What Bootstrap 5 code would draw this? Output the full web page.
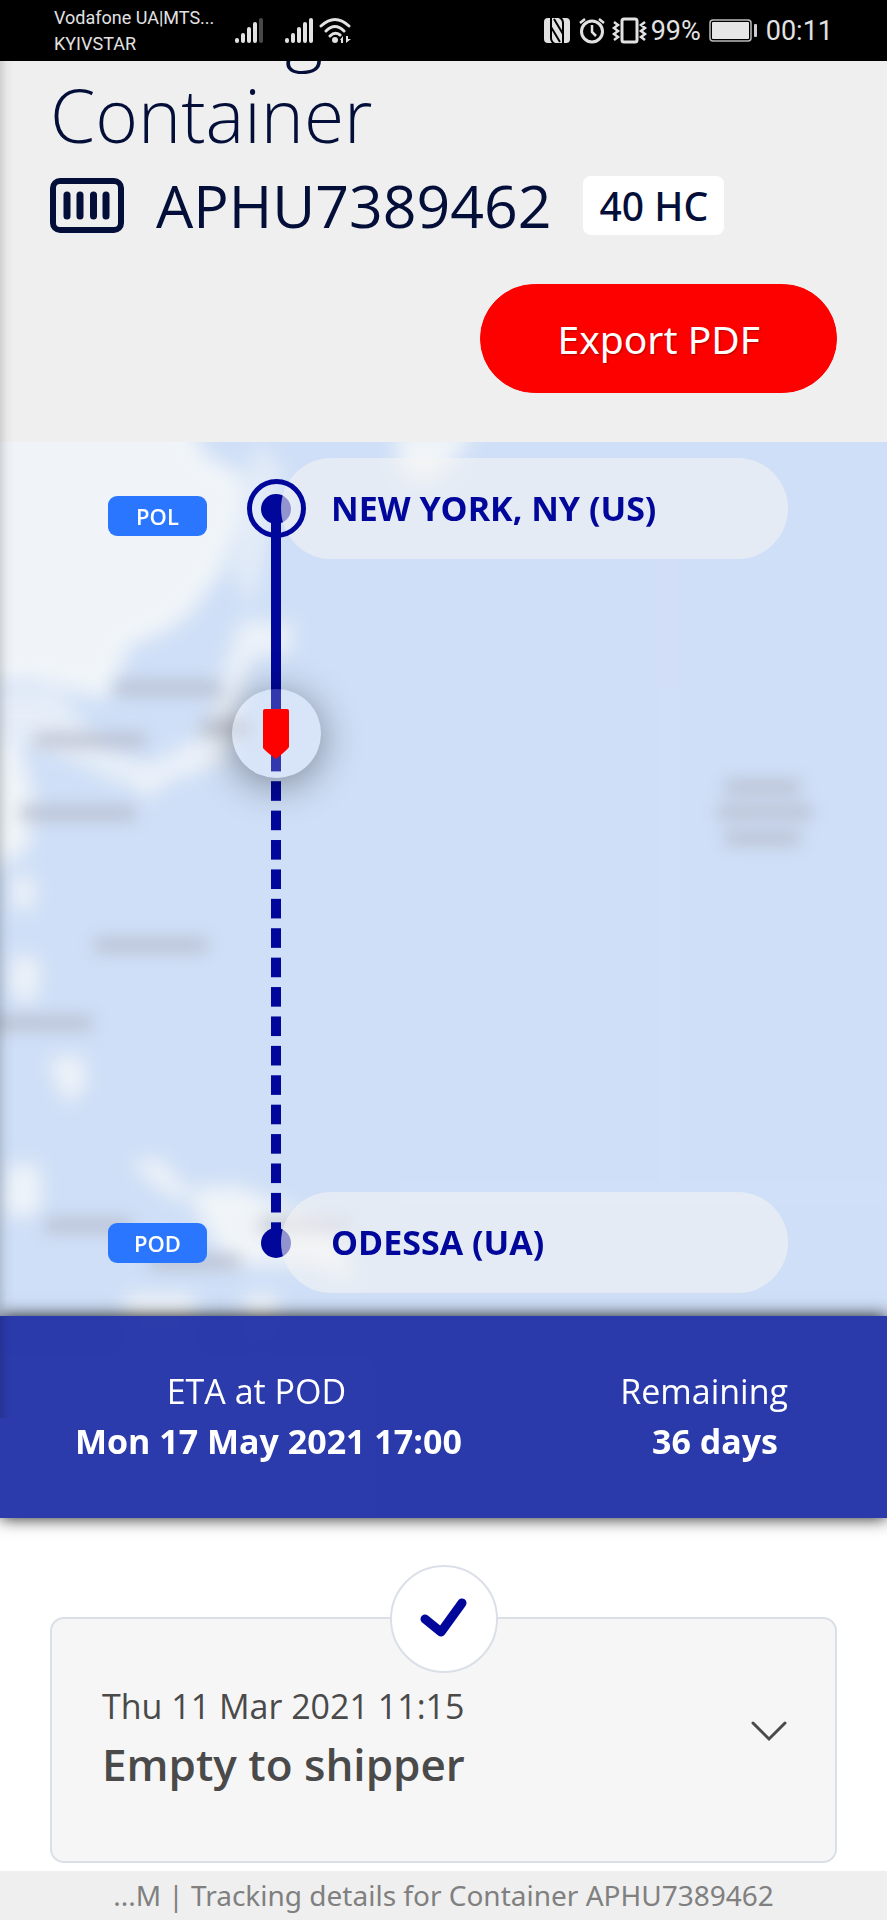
<!DOCTYPE html>
<html lang="en">
<head>
<meta charset="utf-8">
<meta name="viewport" content="width=device-width, initial-scale=1">
<title>Tracking details for Container APHU7389462</title>
<link href="https://cdn.jsdelivr.net/npm/bootstrap@5.3.0/dist/css/bootstrap.min.css" rel="stylesheet">
<style>
:root{--navy:#030f38;--blue:#00079a;--pad:50px}
body{font-family:"Open Sans","Noto Sans",sans-serif;color:#4a4a4a;background:#fff}
svg{display:block;flex:none}
.status-bar{background:#000;color:#e2e2e2;height:61px;padding:1px 54px 0;font-family:Roboto,sans-serif;z-index:5}
.carrier{font-size:18px;line-height:26px;width:160px}
.clock{font-size:27px;line-height:34px}
.side-shade::before{content:"";position:absolute;inset:0 auto 0 0;width:14px;background:linear-gradient(90deg,rgba(0,0,0,.13),rgba(0,0,0,.03) 50%,transparent);z-index:3;pointer-events:none}
.page-head{background:#efefef;color:var(--navy);padding:0 var(--pad) 49px;overflow:hidden}
.page-title{font-size:73px;line-height:86px;font-weight:300;margin:-75px 0 14px}
.box-row{gap:32px}
.box-no{font-size:59px;line-height:66px}
.box-type{font-family:"Noto Sans",sans-serif;font-size:39px;line-height:59px;font-weight:500;background:#fff;border-radius:8px;padding:0 16px}
.export-row{margin-top:46px}
.btn-export{--bs-btn-color:#fff;--bs-btn-bg:#fd0000;--bs-btn-border-color:#fd0000;--bs-btn-hover-color:#fff;--bs-btn-hover-bg:#d90000;--bs-btn-font-size:39px;--bs-btn-line-height:55px;font-family:"Noto Sans",sans-serif;border-radius:56px;padding:26px 76px;text-shadow:1px 1px 2px rgba(0,0,0,.3)}
.map-area{background:#cfdff7}
.map-area.side-shade::before{bottom:100px}
.map-art{position:absolute;inset:0;width:100%;height:100%}
.route{display:grid;grid-template-columns:108px 123px 90px 1fr 99px;grid-template-rows:101px 1fr 101px;padding:16px 0 23px;height:874px}
.tag{grid-column:2;grid-row:1;align-self:center;justify-self:start;width:99px;background:#2b76ff;color:#fff;border-radius:9px;font-size:22px;line-height:40px;font-weight:600;text-align:center}
.tag-pol{margin-top:14px}
.stop{grid-column:4;grid-row:1;margin-left:-40px;background:rgba(244,244,244,.6);border-radius:51px;color:var(--blue);font-size:34px;font-weight:700;line-height:46px;padding:27px 50px 28px;z-index:1}
.dot{grid-column:3;grid-row:1;place-self:center;width:30px;height:30px;border-radius:50%;background:var(--blue)}
.tag.row-last,.dot.row-last,.stop.row-last{grid-row:3}
.ring{grid-column:3;grid-row:1;place-self:center;width:59px;height:59px;border-radius:50%;border:5px solid var(--blue);z-index:2}
.leg{grid-column:3;grid-row:1/4;justify-self:center;width:10px;margin:51px 0;z-index:2}
.leg-done{height:233px;background:var(--blue)}
.leg-todo{background:linear-gradient(transparent 32%,var(--blue) 32%);background-size:10px 29px;background-repeat:no-repeat round}
.vessel{grid-column:3;grid-row:2;justify-self:center;width:89px;height:89px;margin-top:130px;border-radius:50%;background:rgba(255,255,255,.2);box-shadow:0 6px 40px rgba(0,0,0,.42);z-index:3}
.eta{background:rgba(29,45,165,.93);color:#fff;box-shadow:0 0 16px rgba(0,0,0,.9);padding:50px 75px 52px;font-size:34px;line-height:50px;z-index:2}
.eta dt{font-weight:400}
.eta dd{font-weight:700;margin:0}
.eta .days{padding-right:10px}
.events{padding:99px var(--pad) 8px}
.event{background:#f6f6f6;border:2px solid #dadfe8;border-radius:14px;color:#4a4a4a;padding:62px 48px 64px 50px}
.event-date{font-size:34px;line-height:50px}
.event-name{font-size:44px;line-height:66px;font-weight:600}
.event-mark{position:absolute;left:50%;top:0;translate:-50% -50%;width:108px;height:108px;border:2px solid #dadfe8;border-radius:50%;background:#fff}
.foot{background:#efefef;color:#808080;font-family:"Noto Sans",sans-serif;font-size:28px;line-height:49px}
</style>
</head>
<body class="d-flex flex-column min-vh-100">
<div class="status-bar d-flex align-items-center position-relative">
  <div class="carrier text-nowrap">Vodafone UA|MTS...<br>KYIVSTAR</div>
  <svg class="ms-3" width="140" height="28" viewBox="230 17 140 28" fill="#e2e2e2" role="img" aria-label="Signal and Wi-Fi">
    <g id="bars"><rect x="235" y="38" width="4" height="5" rx="2"/><rect x="241" y="33" width="4" height="10" rx="2"/><rect x="247" y="27" width="4" height="16" rx="2"/><rect x="253" y="22" width="4" height="21" rx="2"/></g>
    <rect x="259" y="18" width="4" height="25" rx="2" fill="#484848"/>
    <use href="#bars" x="50"/><rect x="309" y="18" width="4" height="25" rx="2"/>
    <g fill="none" stroke="#e2e2e2" stroke-width="3" stroke-linecap="round"><path d="M321 26Q335 13 349 26M326 31Q335 22 344 31M330 36Q335 31 340 35"/></g>
    <circle cx="335" cy="40" r="3"/><path d="M340 40l3-4v7h-2v-3zM346 36v7l5-4h-3v-3z"/>
  </svg>
  <div class="d-flex align-items-center ms-auto clock">
    <svg width="107" height="28" viewBox="544 17 107 28" fill="none" stroke="#e2e2e2" stroke-width="3" role="img" aria-label="NFC, alarm, vibrate">
      <rect x="544" y="18" width="26" height="25" rx="4" fill="#e2e2e2" stroke="none"/>
      <path stroke="#000" stroke-width="2" d="M551 18V38Q551 42 555 44M563 43V23Q563 19 559 17M551 27L560 42M554 19L563 34"/>
      <circle cx="592" cy="31.500" r="10.500"/><path d="M592 25v7l4 4M580 23l5-4M599 19l5 4" stroke-width="2.500"/>
      <rect x="622" y="19" width="15" height="23" rx="2"/>
      <path stroke-width="2.500" d="M614 22l4 3-4 3 4 3-4 3 4 3-4 3M645 22l-4 3 4 3-4 3 4 3-4 3 4 3"/>
    </svg>
    <span>99%</span>
    <svg class="mx-2" width="49" height="24" viewBox="0 0 49 24" role="img" aria-label="Battery"><rect x="1" y="1" width="41" height="21" rx="3" fill="none" stroke="#bbb" stroke-width="1.500"/><rect x="3" y="3" width="37" height="17" rx="1" fill="#e6e6e6"/><rect x="45" y="5" width="3" height="13" rx="1" fill="#ccc"/></svg>
    <span>00:11</span>
  </div>
</div>

<header class="page-head side-shade position-relative">
  <h1 class="page-title">Tracking details for<br>Container</h1>
  <div class="box-row d-flex align-items-center">
    <svg width="74" height="55" viewBox="0 0 74 55" fill="none" stroke="#030f38"><rect x="3" y="3" width="68" height="49" rx="7" stroke-width="6"/><path d="M17 17v21M30 17v21M43.500 17v21M56 17v21" stroke-width="7" stroke-linecap="round"/></svg>
    <span class="box-no">APHU7389462</span>
    <span class="box-type">40 HC</span>
  </div>
  <div class="export-row text-end"><button type="button" class="btn btn-export">Export PDF</button></div>
</header>

<section class="map-area side-shade position-relative" aria-label="Route">
  <svg class="map-art" viewBox="0 442 887 1076" preserveAspectRatio="none" aria-hidden="true">
    <defs><filter id="soft" x="-20%" y="-20%" width="140%" height="140%"><feGaussianBlur stdDeviation="10"/></filter><filter id="haze" x="-50%" y="-100%" width="200%" height="300%"><feGaussianBlur stdDeviation="8"/></filter></defs>
    <g filter="url(#soft)" fill="#f0f4f8">
      <path d="M-30 400H180L205 455 245 475 240 520 222 570 190 615 160 635 130 645 112 690 100 700 66 688 30 680-30 685Z"/>
      <path d="M60 690L95 740 140 760 150 775 120 785 70 760 35 745-30 725V690Z" opacity=".7"/>
      <path d="M255 440L285 470 270 540 252 610 232 570Z" opacity=".6"/>
      <path d="M240 620L294 623 289 655 255 655 240 690 236 730 222 765 170 780 145 800 125 775 170 755 210 730 218 690 228 660Z" opacity=".9"/>
      <path d="M395 430H478L450 465 430 485 400 475Z"/>
      <path d="M-10 730L20 745 34 800 28 850-10 870Z"/>
      <path d="M12 875l24 5-5 32-17-5zM12 955l28 5-7 48-21-15zM48 1060l34-5 4 30-19 20zM8 1165h32v50H5zM130 1163l28-5 28 30-8 14zM185 1190l50-5 55 23 50 25 15 50-50-20-50 3-30-5z"/>
      <path d="M125 1295h70v45h-70zM245 1295h32v40h-32z"/>
      <path d="M-10 1350h390v200H-10z" opacity=".5"/>
    </g>
    <g fill="none" stroke="#b3b8c6" stroke-width="15" filter="url(#haze)" opacity=".7">
      <path d="M115 688H220M35 740H145M200 728H250M20 813H135M95 945H207M-10 1023H92M45 1225H130M260 1225H350M150 1262H240M725 787H800M718 812H812M725 838H800"/>
    </g>
    <path d="M656 559h24v128h-24z" fill="#d2dcf7" opacity=".8"/><path d="M659 687h20v495h208v24H400v-24h259z" fill="#d2e1fa" opacity=".5"/>
  </svg>
  <div class="route position-relative">
    <span class="tag tag-pol">POL</span>
    <span class="dot"></span>
    <span class="ring"></span>
    <div class="stop">NEW YORK, NY (US)</div>
    <div class="leg d-flex flex-column"><div class="leg-done"></div><div class="leg-todo flex-grow-1"></div></div>
    <div class="vessel d-flex justify-content-center"><svg class="mt-3" width="26" height="56" viewBox="0 0 26 56" role="img" aria-label="Vessel position"><path fill="#fd0000" d="M2 4H24Q26 4 26 6V42Q24 45 13 54Q2 46 0 43V6Q0 4 2 4Z"/></svg></div>
    <span class="tag row-last">POD</span>
    <span class="dot row-last"></span>
    <div class="stop row-last">ODESSA (UA)</div>
  </div>
  <dl class="eta position-relative d-flex justify-content-between text-center mb-0">
    <div><dt class="pe-4">ETA at POD</dt><dd>Mon 17 May 2021 17:00</dd></div>
    <div class="text-end me-4"><dt>Remaining</dt><dd class="days">36 days</dd></div>
  </dl>
</section>

<main class="events">
  <article class="event position-relative d-flex align-items-center justify-content-between">
    <span class="event-mark d-flex align-items-center justify-content-center"><svg width="48" height="42" viewBox="0 0 48 42" fill="none" stroke="#00079a" stroke-width="9" stroke-linecap="round" stroke-linejoin="round" role="img" aria-label="Completed"><path d="M5 21L21 34 42 5"/></svg></span>
    <div><div class="event-date">Thu 11 Mar 2021 11:15</div><div class="event-name">Empty to shipper</div></div>
    <button type="button" class="btn border-0 p-0 mb-3" aria-label="Show details"><svg width="36" height="22" viewBox="0 0 36 22" fill="none" stroke="#4a4a4a" stroke-width="3" stroke-linecap="round"><path d="M2 3L18 19 34 3"/></svg></button>
  </article>
</main>
<footer class="foot text-center mt-auto text-nowrap">...M | Tracking details for Container APHU7389462</footer>
<script src="https://cdn.jsdelivr.net/npm/bootstrap@5.3.0/dist/js/bootstrap.bundle.min.js"></script>
</body>
</html>
